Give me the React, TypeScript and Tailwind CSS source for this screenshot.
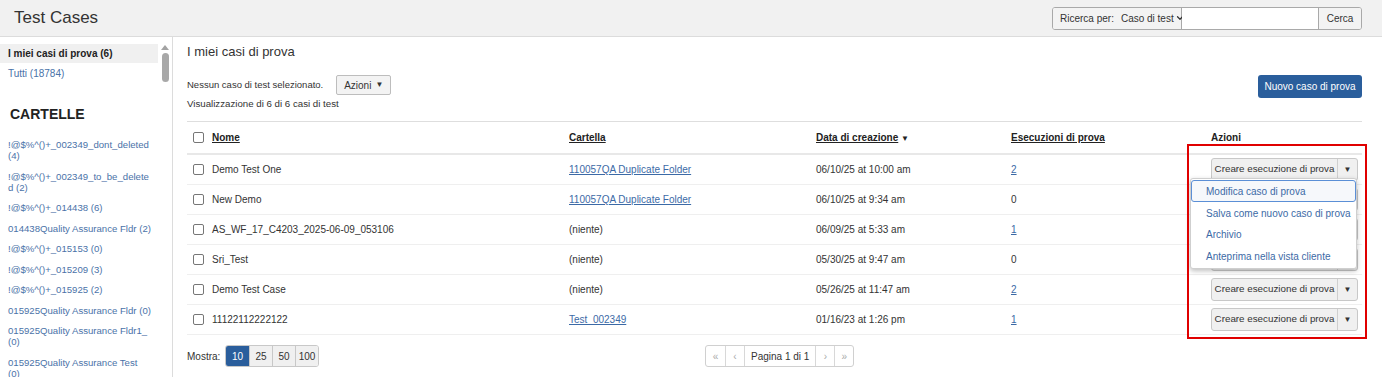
import { ChevronDown } from "lucide-react";

// each folder as the lines it wraps into in the panel
const folders = [
  ["!@$%^()+_002349_dont_deleted", "(4)"],
  ["!@$%^()+_002349_to_be_delete", "d (2)"],
  ["!@$%^()+_014438 (6)"],
  ["014438Quality Assurance Fldr (2)"],
  ["!@$%^()+_015153 (0)"],
  ["!@$%^()+_015209 (3)"],
  ["!@$%^()+_015925 (2)"],
  ["015925Quality Assurance Fldr (0)"],
  ["015925Quality Assurance Fldr1_", "(0)"],
  ["015925Quality Assurance Test", "(0)"],
];

const rows = [
  { name: "Demo Test One", folder: "110057QA Duplicate Folder", date: "06/10/25 at 10:00 am", runs: "2", runLink: true },
  { name: "New Demo", folder: "110057QA Duplicate Folder", date: "06/10/25 at 9:34 am", runs: "0", runLink: false },
  { name: "AS_WF_17_C4203_2025-06-09_053106", folder: "", date: "06/09/25 at 5:33 am", runs: "1", runLink: true },
  { name: "Sri_Test", folder: "", date: "05/30/25 at 9:47 am", runs: "0", runLink: false },
  { name: "Demo Test Case", folder: "", date: "05/26/25 at 11:47 am", runs: "2", runLink: true },
  { name: "11122112222122", folder: "Test_002349", date: "01/16/23 at 1:26 pm", runs: "1", runLink: true },
];

const cols = "grid grid-cols-[25px_357px_247px_195px_200px_1fr] items-center";

function Check() {
  return <span className="block w-[11px] h-[11px] rounded-[2px] border border-[#767676] bg-white" />;
}

function SplitButton() {
  return (
    <div className="flex h-[23px] w-[147px] rounded-[3px] border border-[#c8c8c8] bg-[#f0f0f0] text-[#333]">
      <span className="flex-1 flex items-center justify-center whitespace-nowrap border-r border-[#cfcfcf] text-[9.8px]">Creare esecuzione di prova</span>
      <span className="w-[19px] flex items-center justify-center text-[8px]">▼</span>
    </div>
  );
}

export default function App() {
  return (
    <div className="relative h-[377px] w-[1382px] overflow-hidden bg-white text-[#333]" style={{ fontFamily: "'Liberation Sans', Arial, sans-serif" }}>
      {/* Header */}
      <div className="h-[37px] flex items-center justify-between pl-[14px] pr-[20px] bg-[#f1f1f1] border-b border-[#dcdcdc]">
        <h1 className="text-[17px] text-[#333]">Test Cases</h1>
        <div className="flex h-[23px] rounded-[3px] border border-[#a9a9a9] bg-white text-[10px] overflow-hidden">
          <div className="w-[129px] flex items-center gap-[7px] px-[7px] bg-[#f3f3f3] border-r border-[#a9a9a9] whitespace-nowrap">
            <span>Ricerca per:</span>
            <span className="flex items-center gap-[1px]">Caso di test<ChevronDown size={10} strokeWidth={3} /></span>
          </div>
          <div className="w-[136px] bg-white" />
          <div className="w-[43px] flex items-center justify-center bg-[#f3f3f3] border-l border-[#a9a9a9]">Cerca</div>
        </div>
      </div>

      <div className="flex">
        {/* Sidebar */}
        <div className="w-[173px] h-[340px] shrink-0 border-r border-[#dcdcdc] flex">
          <div className="w-[159px] pt-[7px]">
            <div className="h-[19px] flex items-center pl-[8px] bg-[#f0f0f0] text-[10px] font-bold text-[#222]">I miei casi di prova (6)</div>
            <div className="h-[20px] flex items-center pl-[8px] text-[10px] text-[#4a72a8]">Tutti (18784)</div>
            <div className="pl-[10px] pt-[23px] pb-[17px] text-[14px] leading-[16px] font-bold text-[#222]">CARTELLE</div>
            <div className="flex flex-col gap-[9.5px] pl-[8px]">
              {folders.map((lines) => (
                <div key={lines.join("")} className="flex flex-col text-[9.6px] leading-[11px] text-[#4a72a8] whitespace-nowrap">
                  {lines.map((l) => <span key={l}>{l}</span>)}
                </div>
              ))}
            </div>
          </div>
          <div className="w-[14px] flex flex-col items-center pt-[8px]">
            <span className="w-0 h-0 border-l-[4px] border-r-[4px] border-b-[5px] border-l-transparent border-r-transparent border-b-[#a3a3a3]" />
            <span className="mt-[3px] w-[7px] h-[29px] rounded-full bg-[#a8a8a8]" />
          </div>
        </div>

        {/* Main */}
        <div className="flex-1 pl-[14px] pr-[20px]">
          <h2 className="mt-[5px] text-[13px] leading-[20px] text-[#333]">I miei casi di prova</h2>
          <div className="mt-[13px] flex items-start justify-between">
            <div>
              <div className="flex items-center gap-[13px] text-[9.5px]">
                <span>Nessun caso di test selezionato.</span>
                <span className="h-[20px] w-[55px] flex items-center justify-center gap-[4px] rounded-[2px] border border-[#bdbdbd] bg-[#f3f3f3] text-[10px]">
                  Azioni <span className="text-[8px]">▼</span>
                </span>
              </div>
              <div className="mt-[3px] text-[9.7px] leading-[12px]">Visualizzazione di 6 di 6 casi di test</div>
            </div>
            <div className="h-[23px] w-[104px] rounded-[3px] bg-[#2a5e9c] text-white text-[10px] flex items-center justify-center whitespace-nowrap">
              Nuovo caso di prova
            </div>
          </div>

          {/* Table */}
          <div className="mt-[11px] border-t border-[#dedede] text-[10px]">
            <div className={`${cols} h-[33px] border-b-2 border-[#e8e8e8] font-bold text-[#222]`}>
              <span className="pl-[6px]"><Check /></span>
              <span className="underline">Nome</span>
              <span className="underline">Cartella</span>
              <span><span className="underline">Data di creazione</span> <span className="text-[8px]">▼</span></span>
              <span className="underline">Esecuzioni di prova</span>
              <span>Azioni</span>
            </div>
            {rows.map((r) => (
              <div key={r.name} className={`${cols} h-[30px] border-b border-[#efefef]`}>
                <span className="pl-[6px]"><Check /></span>
                <span>{r.name}</span>
                <span className={r.folder ? "underline text-[#3c6aa6]" : ""}>{r.folder || "(niente)"}</span>
                <span>{r.date}</span>
                <span className={r.runLink ? "underline text-[#3c6aa6]" : ""}>{r.runs}</span>
                <span><SplitButton /></span>
              </div>
            ))}
          </div>

          {/* Footer */}
          <div className="mt-[10px] flex items-center h-[22px] text-[10px]">
            <span className="w-[35px]">Mostra:</span>
            <div className="ml-[3px] flex h-[22px] rounded-[3px] border border-[#c8c8c8] overflow-hidden">
              <span className="w-[23px] flex items-center justify-center bg-[#2a5e9c] text-white">10</span>
              <span className="w-[23px] flex items-center justify-center bg-[#f0f0f0] border-l border-[#c8c8c8]">25</span>
              <span className="w-[23px] flex items-center justify-center bg-[#f0f0f0] border-l border-[#c8c8c8]">50</span>
              <span className="w-[23px] flex items-center justify-center bg-[#f0f0f0] border-l border-[#c8c8c8]">100</span>
            </div>
            <div className="ml-[386px] flex h-[22px] rounded-[3px] border border-[#d0d0d0] text-[#aaa]">
              <span className="w-[19px] flex items-center justify-center">«</span>
              <span className="w-[19px] flex items-center justify-center border-l border-[#d8d8d8]">‹</span>
              <span className="px-[6px] flex items-center border-l border-[#d8d8d8] text-[#333]">Pagina 1 di 1</span>
              <span className="w-[19px] flex items-center justify-center border-l border-[#d8d8d8]">›</span>
              <span className="w-[19px] flex items-center justify-center border-l border-[#d8d8d8]">»</span>
            </div>
          </div>
        </div>
      </div>

      {/* Dropdown menu */}
      <div className="absolute left-[1190px] top-[178px] w-[167px] rounded-[3px] border border-[#cfcfcf] bg-white shadow-[0_2px_5px_rgba(0,0,0,0.25)] text-[10px] text-[#3c6aa6] py-[1px] whitespace-nowrap">
        <div className="h-[22px] flex items-center pl-[14px] rounded-[3px] border border-[#5b8fd6] bg-[#f6f8fb]">Modifica caso di prova</div>
        <div className="h-[22px] flex items-center pl-[15px]">Salva come nuovo caso di prova</div>
        <div className="h-[21px] flex items-center pl-[15px]">Archivio</div>
        <div className="h-[22px] flex items-center pl-[15px]">Anteprima nella vista cliente</div>
      </div>

      {/* Highlight box */}
      <div className="absolute left-[1187px] top-[144px] w-[180px] h-[195px] border-2 border-[#e00000] pointer-events-none" />
    </div>
  );
}
